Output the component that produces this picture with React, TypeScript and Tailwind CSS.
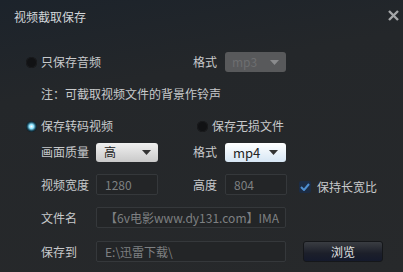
import React from "react";

const font = { fontFamily: '"Noto Sans CJK SC", "Microsoft YaHei", sans-serif' };

function Radio({ on }: { on?: boolean }) {
    return (
        <span
            className={
                "inline-block w-[11px] h-[11px] rounded-full shrink-0 " +
                (on
                    ? "bg-[radial-gradient(circle,#ffffff_0%,#8fe4ff_28%,#1b4a5e_55%,#0d1216_75%)]"
                    : "bg-[#111214] shadow-[inset_0_0_0_1px_#1a1b1d]")
            }
        />
    );
}

function Arrow({ color }: { color: string }) {
    return (
        <svg width="9" height="5" viewBox="0 0 9 5" className="shrink-0">
            <path d="M0 0 L9 0 L4.5 5 Z" fill={color} />
        </svg>
    );
}

function Field({ value, w }: { value: string; w: string }) {
    return (
        <div className={`${w} h-[21px] flex items-center pl-[8px] bg-[#232527] border border-[#35383b] rounded-[2px] overflow-hidden whitespace-nowrap text-[12px] text-[#7e8082]`}>
            {value}
        </div>
    );
}

export default function App() {
    return (
        <div style={font} className="w-[403px] h-[272px] overflow-hidden bg-[linear-gradient(170deg,#1c232b_0%,#24272a_30%,#27292b_100%)] text-[12px] leading-none text-[#c8cacc]">
            {/* title */}
            <div className="h-[34px] flex items-center justify-between pl-[14px] pr-[4px]">
                <span className="text-[#d2d6da]">视频截取保存</span>
                <svg width="11" height="11" viewBox="0 0 11 11" className="mb-[4px]">
                    <path d="M1 1 L10 10 M10 1 L1 10" stroke="#a4a6a8" strokeWidth="2.4" />
                </svg>
            </div>

            {/* audio only */}
            <div className="mt-[18px] h-[20px] flex items-center pl-[26px]">
                <div className="w-[167px] flex items-center gap-[4px]">
                    <Radio />
                    <span>只保存音频</span>
                </div>
                <span className="w-[32px]">格式</span>
                <div className="w-[61px] h-[20px] rounded-[3px] bg-[#58595b] flex items-center justify-between pl-[7px] pr-[7px]">
                    <span className="text-[#6d6e70]">mp3</span>
                    <Arrow color="#8a8b8d" />
                </div>
            </div>

            <div className="mt-[14px] h-[16px] flex items-center pl-[41px]">注：可截取视频文件的背景作铃声</div>

            {/* mode */}
            <div className="mt-[16px] h-[16px] flex items-center pl-[26px]">
                <div className="w-[171px] flex items-center gap-[4px]">
                    <Radio on />
                    <span>保存转码视频</span>
                </div>
                <div className="flex items-center gap-[4px]">
                    <Radio />
                    <span>保存无损文件</span>
                </div>
            </div>

            {/* quality / format */}
            <div className="mt-[8px] h-[20px] flex items-center pl-[41px]">
                <span className="w-[55px]">画面质量</span>
                <div className="w-[62px] h-[19px] rounded-[3px] bg-[linear-gradient(#f0f0f0,#c9c9c9)] flex items-center justify-between pl-[8px] pr-[7px] text-[#222]">
                    <span>高</span>
                    <Arrow color="#333" />
                </div>
                <span className="ml-[35px] w-[32px]">格式</span>
                <div className="w-[61px] h-[19px] rounded-[3px] bg-[linear-gradient(#ffffff,#d6e6f4)] flex items-center justify-between pl-[8px] pr-[8px] text-[#222] text-[13px]">
                    <span>mp4</span>
                    <Arrow color="#333" />
                </div>
            </div>

            {/* size */}
            <div className="mt-[12px] h-[21px] flex items-center pl-[41px]">
                <span className="w-[55px]">视频宽度</span>
                <Field value="1280" w="w-[62px]" />
                <span className="ml-[35px] w-[32px]">高度</span>
                <Field value="804" w="w-[62px]" />
                <div className="ml-[12px] mt-[4px] flex items-center gap-[6px]">
                    <span className="w-[12px] h-[12px] rounded-[2px] bg-[#1c2c44] flex items-center justify-center">
                        <svg width="10" height="8" viewBox="0 0 10 8">
                            <path d="M1 4 L4 7 L9 1" stroke="#4f8fd0" strokeWidth="2" fill="none" />
                        </svg>
                    </span>
                    <span>保持长宽比</span>
                </div>
            </div>

            {/* file name */}
            <div className="mt-[12px] h-[21px] flex items-center pl-[41px]">
                <span className="w-[55px]">文件名</span>
                <Field value="【6v电影www.dy131.com】IMA" w="w-[190px]" />
            </div>

            {/* save path */}
            <div className="mt-[13px] h-[21px] flex items-center pl-[41px]">
                <span className="w-[55px]">保存到</span>
                <Field value="E:\迅雷下载\" w="w-[190px]" />
                <div className="ml-[17px] w-[80px] h-[21px] rounded-[3px] border border-[#15171a] bg-[linear-gradient(#3a3d42,#1c1f2a_60%,#151a2c)] flex items-center justify-center text-[#e0e2e4]">
                    浏览
                </div>
            </div>
        </div>
    );
}
